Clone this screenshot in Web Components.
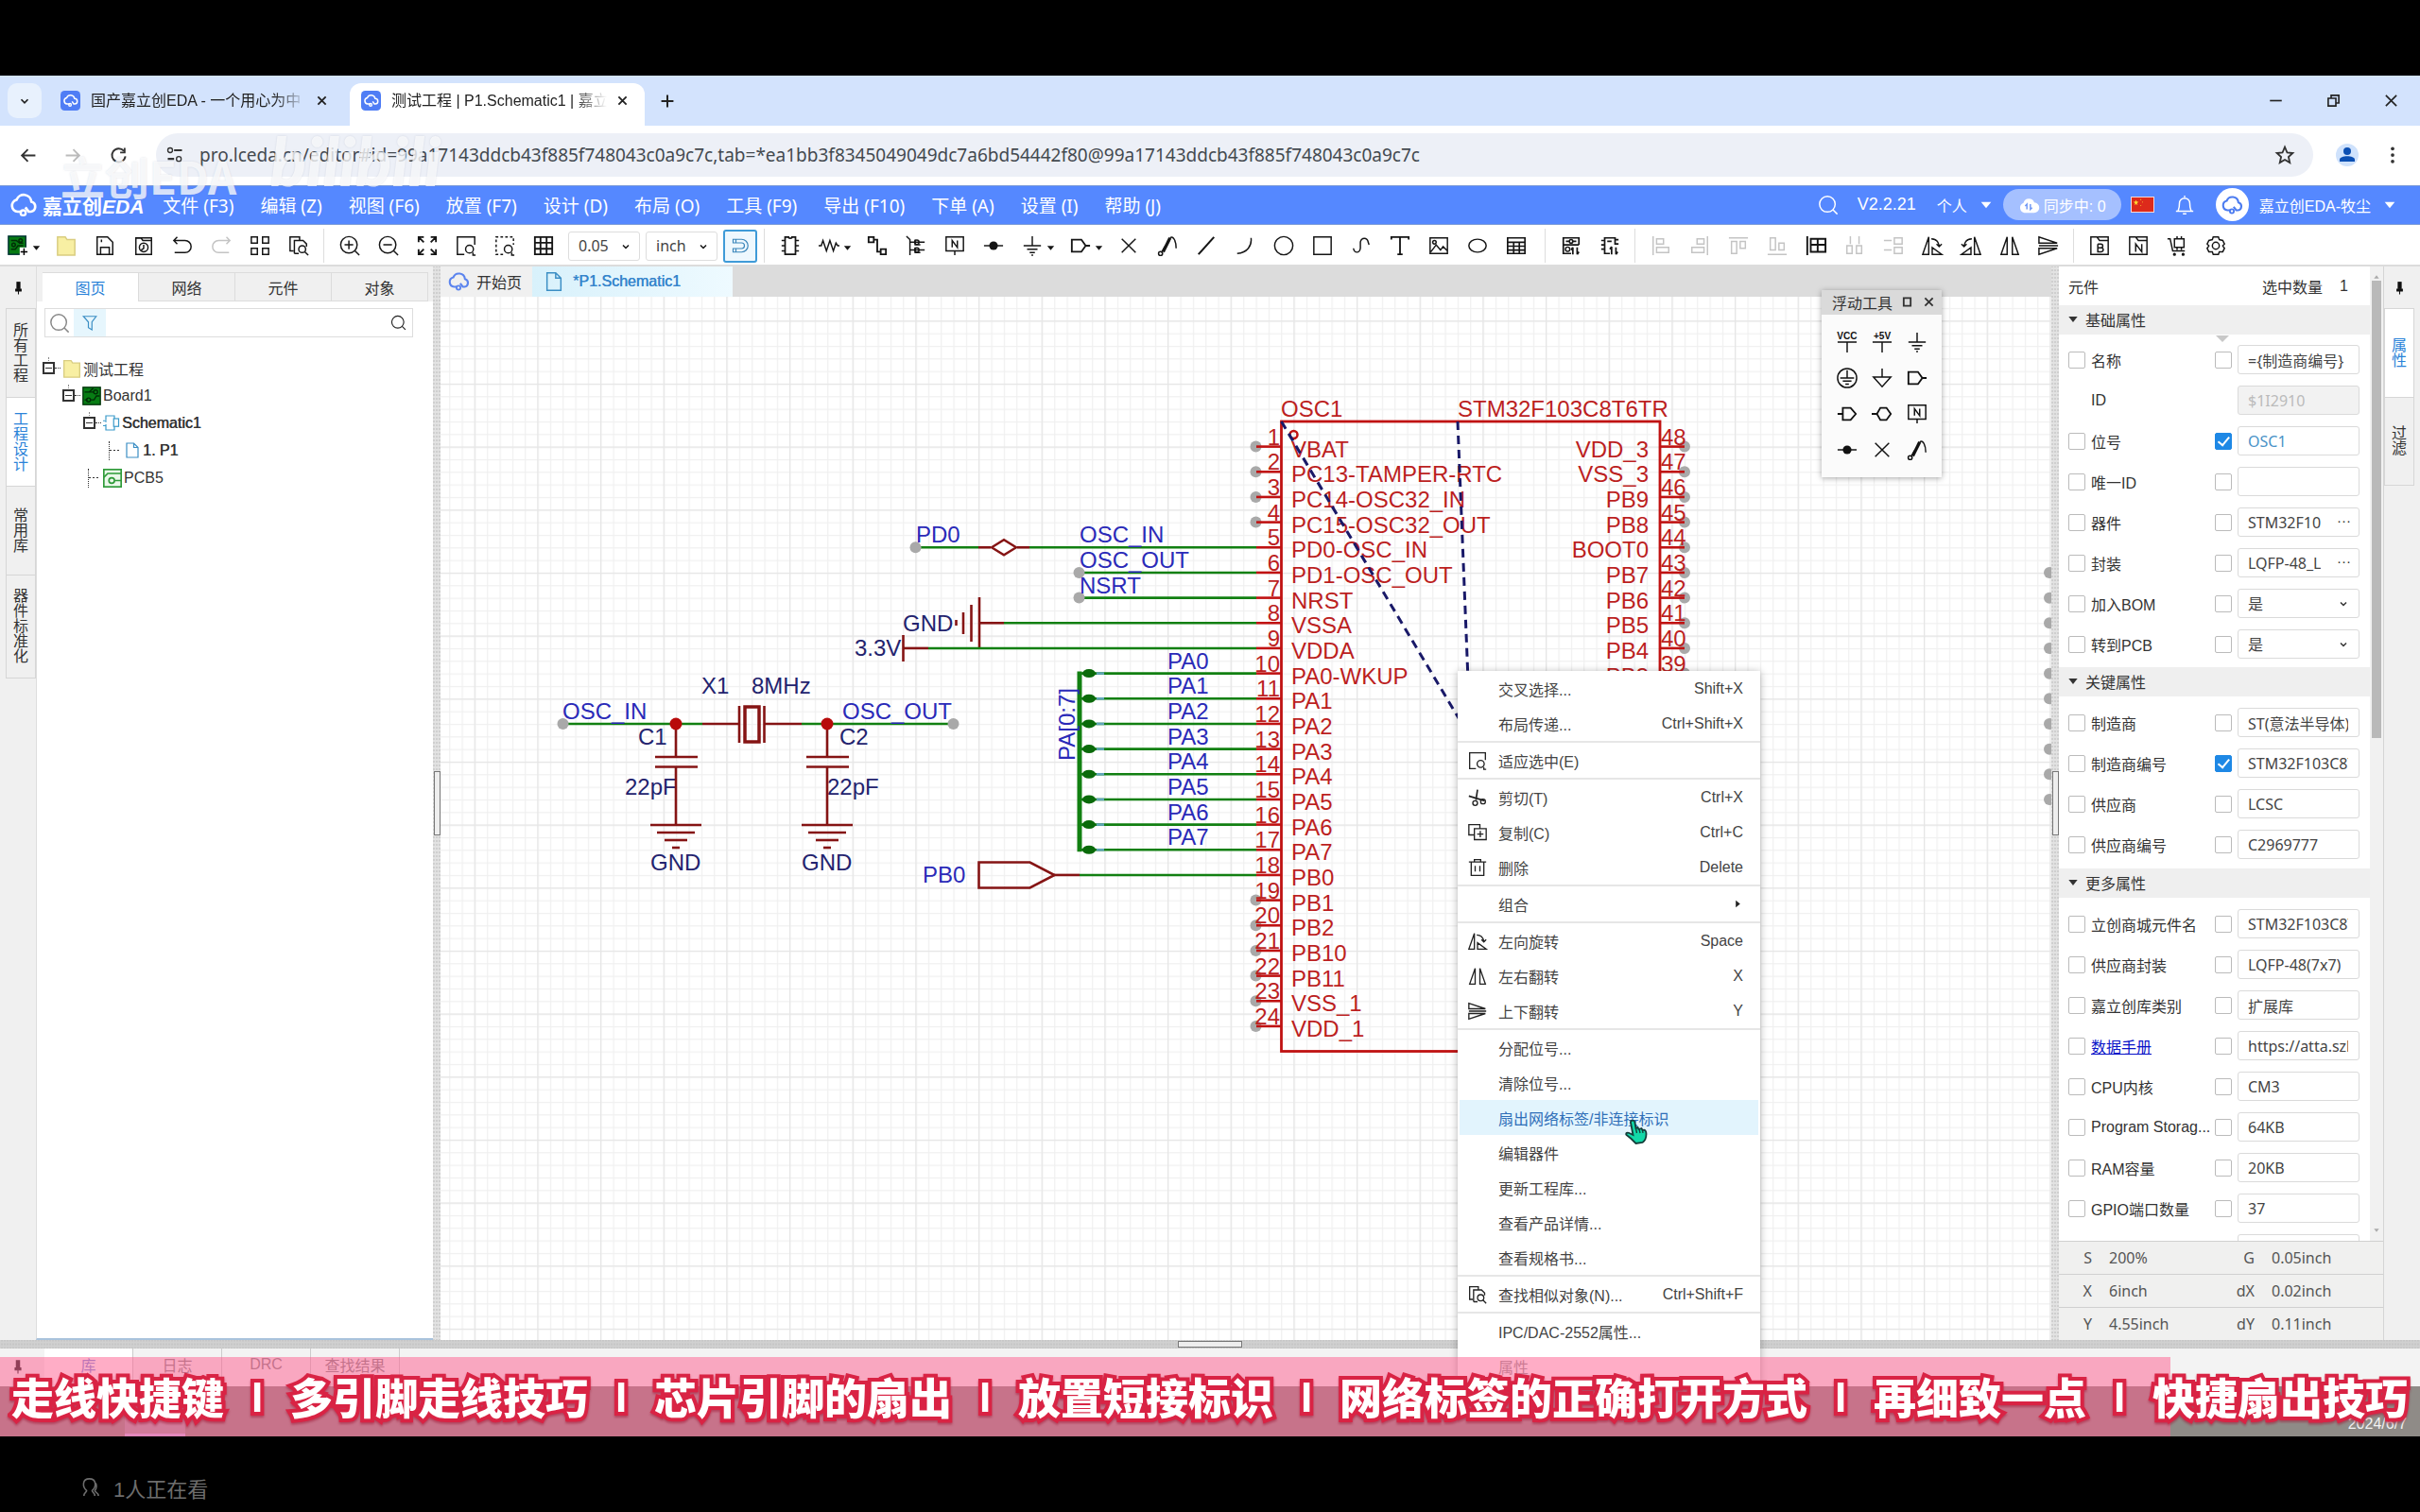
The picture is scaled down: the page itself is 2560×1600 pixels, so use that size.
<!DOCTYPE html>
<html lang="zh-CN">
<head>
<meta charset="utf-8">
<title>测试工程 | P1.Schematic1</title>
<style>
html,body{margin:0;height:100%;background:#000}
body{font:16px "Liberation Sans","Noto Sans CJK SC",sans-serif;color:#333;overflow:hidden}
</style>
</head>
<body>
<eda-app></eda-app>
<script>
const CJK = '"Noto Sans CJK SC",sans-serif';
function define(name, css, html) {
  customElements.define(name, class extends HTMLElement {
    connectedCallback() {
      if (this.shadowRoot) return;
      const root = this.attachShadow({ mode: 'open' });
      const body = typeof html === 'function' ? html(this) : html;
      root.innerHTML = `<style>:host,*{box-sizing:border-box}button,input,select{font:inherit;color:inherit;margin:0}button{border:0;background:none;padding:0;display:block}a{color:inherit}${css}</style>${body}`;
    }
  });
}

/* ---------- icons, all on a 24 unit box ---------- */
const I = {
  down: '<path d="M6 9l6 6 6-6" stroke-width="3"/>',
  caret: '<path d="M4 7h16l-8 10z" fill="currentColor" stroke="none"/>',
  right: '<path d="M7 4v16l10-8z" fill="currentColor" stroke="none"/>',
  x: '<path d="M4 4l16 16M20 4L4 20"/>',
  xw: '<path d="M3 3l18 18M21 3L3 21" stroke-width="2.6"/>',
  xb: '<path d="M3 3l18 18M21 3L3 21" stroke-width="4"/>',
  plus: '<path d="M12 1v22M1 12h22" stroke-width="3.4"/>',
  min: '<path d="M2 12h20" stroke-width="2.6"/>',
  restore: '<path d="M3 8h13v13H3zM8 8V3h13v13h-5" stroke-width="2.6"/>',
  back: '<path d="M22 12H4M12 4l-8 8 8 8" stroke-width="2.4"/>',
  fwd: '<path d="M2 12h18M12 4l8 8-8 8" stroke-width="2.4"/>',
  reload: '<path d="M19 6a9 9 0 1 0 2 7M20 2v6h-6" stroke-width="2.4"/>',
  site: '<path d="M11 6h10M3 17h8" stroke-width="2.6"/><circle cx="6" cy="6" r="3"/><circle cx="17" cy="17" r="3"/>',
  star: '<path d="M12 2l3 7 7 .6-5.300 4.800 1.600 7.300L12 18l-6.300 3.700 1.600-7.300L2 9.600 9 9z" stroke-width="2.2"/>',
  dots: '<g fill="currentColor" stroke="none"><circle cx="12" cy="3" r="2.500"/><circle cx="12" cy="12" r="2.500"/><circle cx="12" cy="21" r="2.500"/></g>',
  user: '<circle cx="12" cy="12" r="12" fill="#cfe2fc" stroke="none"/><g fill="#0b4fb3" stroke="none"><circle cx="12" cy="8" r="4"/><path d="M4 19v-2c0-5 16-5 16 0v2z"/></g>',
  cloud: '<path d="M11 18H7a5.500 5.500 0 0 1-1-10.800A7 7 0 0 1 19.500 9a4.600 4.600 0 0 1-.5 9h-2l-3-4" stroke-width="2.300"/><circle cx="12" cy="19" r="2.300" stroke-width="2"/>',
  tab: '<rect width="24" height="24" rx="5" fill="#4f7df5" stroke="none"/><path d="M11 16H8a3.800 3.800 0 0 1-.5-7.500 5 5 0 0 1 9.500 1 3.200 3.200 0 0 1 0 6.500h-1l-2-3" stroke="#fff" stroke-width="1.700"/><circle cx="11.500" cy="17" r="1.500" stroke="#fff"/>',
  search: '<circle cx="11" cy="11" r="9"/><path d="M17.500 17.500l5 5"/>',
  bell: '<path d="M2 19h20M4.500 19c0-2 1.500-2 1.500-9a6 6 0 0 1 12 0c0 7 1.500 7 1.500 9M10 22h4M12 1v2"/>',
  sync: '<path d="M7 21a6 6 0 0 1-1-11.500A6.500 6.500 0 0 1 18.500 9 6 6 0 0 1 18 21z" fill="#fff" stroke="none"/><path d="M10 17v-6l-2 2M14 11v6l2-2" stroke="#6f97f5"/>',
  board: '<rect x="1" y="1" width="20" height="21" fill="#067a12" stroke="#033"/><path d="M4 6h6l4 3h4M4 16h5l3-4h6" stroke="#012d06"/><circle cx="15" cy="6" r="2" stroke="#012d06"/><circle cx="7" cy="11" r="2" stroke="#012d06"/><path d="M14 14h10v10H14z" fill="#fff" stroke="none"/><path d="M19 15v8M15 19h8" stroke="#000"/>',
  boardt: '<rect x="1" y="1" width="22" height="22" fill="#077d14" stroke="#02330a"/><path d="M3 7h8l4 0M3 17h4M11 17h4l3-5h4M14 2l-5 5" stroke="#012d06"/><circle cx="17" cy="7" r="2.500" stroke="#012d06"/><circle cx="8" cy="17" r="2.500" stroke="#012d06"/>',
  folder: '<path d="M2 23V2h9l2 3h9v18z" fill="#f8efa3" stroke="#d9cd80"/>',
  save: '<path d="M3 2h12l6 6v14H3zM7 22v-8h10v8M8 5v3"/>',
  hist: '<path d="M3 22V3h6l2 3h10v16zM12 11v4l-3 2"/><circle cx="12" cy="14" r="5"/><path d="M3 3h18v3"/>',
  undo: '<path d="M6 2L2 6l4 4M2 6h13a7 7 0 0 1 0 14H3"/>',
  redo: '<path d="M18 2l4 4-4 4M22 6H9a7 7 0 0 0 0 14h12"/>',
  four: '<path d="M2 2h7v7H2zM15 2h7v7h-7zM2 15h7v7H2zM15 15h7v7h-7z"/>',
  find: '<path d="M6 18H2V2h11v4M7 21V6h10l4 4v3M7 21h5"/><circle cx="16" cy="16" r="4"/><path d="M19 19l4 4"/>',
  zin: '<circle cx="11" cy="11" r="9.500"/><path d="M18 18l5 5M6 11h10M11 6v10"/>',
  zout: '<circle cx="11" cy="11" r="9.500"/><path d="M18 18l5 5M6 11h10"/>',
  fit: '<path d="M2 8V2h6M2 2l6 6M22 8V2h-6M22 2l-6 6M2 16v6h6M2 22l6-6M22 16v6h-6M22 22l-6-6" stroke-width="2"/>',
  fitsel: '<path d="M10 22H2V2h20v9"/><circle cx="16" cy="16" r="4.500"/><path d="M20 20v3h3"/>',
  area: '<path d="M10 22H2V2h20v9" stroke-dasharray="3 2.500"/><circle cx="16" cy="16" r="4.500"/><path d="M20 20v3h3"/>',
  grid: '<path d="M2 2h20v20H2zM2 8.500h20M2 15.500h20M8.500 2v20M15.500 2v20" stroke-width="2"/>',
  magnet: '<path d="M2 3h12a9 9 0 0 1 0 18H2v-5h12a4 4 0 0 0 0-8H2zM6 3v5M6 16v5"/>',
  chip: '<path d="M6 2h4c0 2 4 2 4 0h4v20H6zM2 6h4M2 12h4M2 18h4M18 6h4M18 12h4M18 18h4" stroke-width="1.900"/>',
  res: '<path d="M0 12h3l2-6 4 12 4-12 4 12 3-9 2 3h2"/>',
  wire: '<path d="M2 2h6v6H2zM16 16h6v6h-6zM8 5h4v14h4" stroke-width="2"/>',
  bus: '<path d="M1 1l4 4v18M5 8h17M5 17h17M11 5v6h6M11 14v6h6"/><circle cx="13" cy="8" r="2.500"/><circle cx="13" cy="17" r="2.500"/>',
  nlab: '<path d="M2 2h20v16H2zM12 18v5M9 14V6l6 8V6"/>',
  junc: '<path d="M1 12h22"/><circle cx="12" cy="12" r="5" fill="currentColor" stroke="none"/>',
  gnd: '<path d="M12 1v11M2 12h20M6 16h12M9 20h6M11 23h2"/>',
  port: '<path d="M2 5h11l5 7-5 7H2zM18 12h5" stroke-width="2"/>',
  portl: '<path d="M7 5h9l6 7-6 7H7zM1 12h6" stroke-width="2"/>',
  porto: '<path d="M10 5h7l5 7-5 7h-7l-4-7zM0 12h6" stroke-width="2"/>',
  probe: '<path d="M7 19L15 3" stroke-width="3.600"/><path d="M15 3c4-3 7 4 7 12M5 20l4-7"/><circle cx="4" cy="21" r="2.300"/>',
  line: '<path d="M3 22L21 2" stroke-width="2.200"/>',
  arc: '<path d="M19 3c1 9-4 17-16 18"/>',
  circ: '<circle cx="12" cy="12" r="10.500"/>',
  rect: '<path d="M2 2h20v20H2z"/>',
  curve: '<path d="M3 15c1 6 7 6 8 0V8c1-6 8-6 9 0l1 3"/>',
  text: '<path d="M2 5V2h20v3M12 2v20M9 22h6" stroke-width="2"/>',
  img: '<path d="M2 3h20v18H2zM3 19l6-8 5 6 3-4 5 5"/><circle cx="7" cy="8" r="2"/>',
  ell: '<ellipse cx="12" cy="12" rx="10" ry="7.500"/>',
  table: '<path d="M2 3h20v18H2zM2 8h20M2 12.500h20M2 17h20M9 8v13M15.500 8v13" stroke-width="1.800"/>',
  swapa: '<path d="M12 21H3V3h18v8M6 7h4M13 7h5M3 11h18M14 14v8M14 14l-2 3M19 22v-8M19 22l2-3" stroke-width="1.900"/><circle cx="8" cy="16" r="2.500"/><circle cx="12" cy="7" r="2"/>',
  swapb: '<path d="M12 21H6V3h12v8M2 6h4M2 11h4M2 16h4M18 5h4M18 10h4M9 7h5M14 13v9M14 13l-2 3M19 22v-8M19 22l2-3" stroke-width="1.900"/>',
  al: '<path d="M3 1v22M7 4h8v6H7zM7 14h14v6H7z"/>',
  ar: '<path d="M21 1v22M9 4h8v6H9zM3 14h14v6H3z"/>',
  at: '<path d="M1 3h22M4 7h6v14H4zM14 7h6v8h-6z"/>',
  ab: '<path d="M1 22h22M4 3h6v14H4zM14 9h6v8h-6z"/>',
  snap: '<path d="M2 1v22M6 4h17v15H6zM6 11h17M14 4v15" stroke-width="2.100"/>',
  dh: '<path d="M7 1v9M17 1v9M3 12h6v9H3zM14 12h6v9h-6z"/>',
  dv: '<path d="M1 6h9M1 17h9M13 3h9v7h-9zM13 14h9v7h-9z"/>',
  rotl: '<path d="M8 2v20H1zM12 22h11L12 14zM11 4c5 0 8 3 9 8M17 10l3 3 3-3" />',
  rotr: '<path d="M16 2v20h7zM12 22H1l11-8zM13 4c-5 0-8 3-9 8M7 10l-3 3-3-3"/>',
  fliph: '<path d="M9 2v20H2zM15 2v20h7z"/>',
  flipv: '<path d="M1 2v7h21zM1 22v-7h21zM1 12h22"/>',
  fb: '<path d="M2 22V2h7l3 4h10v16zM10 10v9h4c3 0 3-4.500 0-4.500h-4M10 10h3.500c3 0 3 4.500 0 4.500M10 2h12v4"/>',
  fn: '<path d="M2 22V2h7l3 4h10v16zM9 19v-9l7 9v-9M10 2h12v4"/>',
  cart: '<path d="M1 4h3l3 14h14M9 4h11v10H9zM12 1v3M17 1v3M12 14v3M17 14v3"/><circle cx="9" cy="22" r="1"/><circle cx="19" cy="22" r="1"/>',
  gear: '<path d="M9 2h6l1 3 4 1 2 4-2 2 2 3-2 4-4 0-1 3H9l-1-3-4 0-2-4 2-3-2-2 2-4 4-1z"/><circle cx="12" cy="12" r="4"/>',
  pin: '<path d="M9 3h6v11H9z" fill="currentColor" stroke="none"/><path d="M8 14h8v3H8zM12 17v5" fill="currentColor" stroke-width="1.500"/>',
  filter: '<path d="M3 3h18l-6 8v11l-5-3v-8z"/>',
  file: '<path d="M4 2h10l6 6v14H4zM14 2v6h6" stroke="#3b8ec4"/>',
  sch: '<path d="M4 8V2h12v4M4 16v6h12v-5M0 9h4v2M0 16h4v-2" stroke="#3b9ac9"/><rect x="15" y="6" width="7" height="11" stroke="#3b9ac9"/>',
  pcb: '<rect x="1" y="1" width="22" height="22" fill="#eaf8ea" stroke="#2e9a38" stroke-width="2"/><path d="M1 11l5-5h17M15 15h8" stroke="#2e9a38" stroke-width="2"/><circle cx="11" cy="15" r="3.500" stroke="#2e9a38" stroke-width="2"/>',
  vcc: '<path d="M1 12h22M12 12v12"/><text x="12" y="9" font-size="11" text-anchor="middle" fill="currentColor" stroke="none" font-weight="bold">VCC</text>',
  v5: '<path d="M1 12h22M12 12v12"/><text x="12" y="9" font-size="11" text-anchor="middle" fill="currentColor" stroke="none" font-weight="bold">+5V</text>',
  pgnd: '<circle cx="12" cy="12" r="11"/><path d="M12 3v9M4 12h16M7 15.500h10M10 19h4"/>',
  agnd: '<path d="M12 1v10M2 11h20l-10 11z"/>',
  sq: '<path d="M4 3h16v18H4z" stroke-width="4"/>',
  cut: '<path d="M1 10l20 6M12 2l-2 13" stroke-width="2"/><circle cx="9" cy="19" r="3"/><circle cx="19" cy="17" r="3"/>',
  copy: '<path d="M8 15H1V2h14v5M8 7h15v14H8zM15.500 10v8M11.500 14h8"/>',
  del: '<path d="M1 5h22M8 5V2h8v3M4 5v17h16V5M9 10v7M15 10v7"/>',
  people: '<path d="M5 22c0-4 3-4 3-6-5-4-5-13 3-13s8 9 3 13c0 2 3 2 3 6M17 7c3 2 2 7 0 9 0 2 4 2 4 6"/>'
};
define('eda-icon', `:host{display:block;width:22px;height:22px;flex:none}svg{display:block;width:100%;height:100%;overflow:visible;font-family:"Liberation Sans"}`,
  el => `<svg viewBox="0 0 24 24" fill="none" stroke="currentColor" stroke-width="1.6" aria-hidden="true">${I[el.getAttribute('name')]}</svg>`);
const ic = (n, c = '') => `<eda-icon name="${n}" class="${c}"></eda-icon>`;

/* ---------- browser chrome ---------- */
define('browser-tabs', `
:host{display:flex;align-items:center;height:53px;background:#d3e3fd;padding:0 23px 0 8px;color:#222}
.menu{width:36px;height:37px;border-radius:10px;background:#e8f1fd;display:grid;place-items:center;margin-right:8px}
.menu eda-icon{width:14px;height:14px}
.tab{display:flex;align-items:center;gap:11px;width:318px;height:45px;align-self:flex-end;padding:0 24px 8px 12px}
.tab eda-icon{width:21px;height:21px}
.tab span{flex:1;white-space:nowrap;overflow:hidden;height:24px;line-height:24px;-webkit-mask-image:linear-gradient(90deg,#000 85%,transparent)}
.on{background:#fff;border-radius:12px 12px 0 0;width:312px;padding-right:18px}
.tab eda-icon.c{width:11px;height:11px}
.add{margin-left:17px}.add eda-icon{width:14px;height:14px}
.win{margin-left:auto;display:flex;gap:46px}.win eda-icon{width:15px;height:15px}`,
`<button class="menu" aria-label="搜索标签页">${ic('down')}</button>
<div class="tab">${ic('tab')}<span>国产嘉立创EDA - 一个用心为中</span><button aria-label="关闭">${ic('xb','c')}</button></div>
<div class="tab on">${ic('tab')}<span>测试工程 | P1.Schematic1 | 嘉立</span><button aria-label="关闭">${ic('xb','c')}</button></div>
<button class="add" aria-label="新标签页">${ic('plus')}</button>
<div class="win"><button aria-label="最小化">${ic('min')}</button><button aria-label="还原">${ic('restore')}</button><button aria-label="关闭窗口">${ic('xw')}</button></div>`);

define('address-bar', `
:host{display:flex;align-items:center;height:63px;background:#fff;padding:0 20px 1px;color:#333}
.nav{display:flex;gap:29px;margin-right:30px}.nav eda-icon{width:19px;height:19px}.off{color:#bbb}
.box{flex:1;height:46px;border-radius:23px;background:#edf0f7;display:flex;align-items:center;gap:16px;padding:0 20px 0 10px}
.box eda-icon{width:20px;height:20px}
input{flex:1;border:0;background:none;padding:0;font:19px "Noto Sans",${CJK};color:#444a50;min-width:0}
.u{width:24px;height:24px;margin:0 27px 0 24px}.d{width:18px;height:18px}`,
`<div class="nav"><button aria-label="后退">${ic('back')}</button><button class="off" aria-label="前进">${ic('fwd')}</button><button aria-label="重新加载">${ic('reload')}</button></div>
<div class="box">${ic('site')}<input aria-label="地址" value="pro.lceda.cn/editor#id=99a17143ddcb43f885f748043c0a9c7c,tab=*ea1bb3f8345049049dc7a6bd54442f80@99a17143ddcb43f885f748043c0a9c7c">${ic('star')}</div>
${ic('user','u')}<button aria-label="更多">${ic('dots','d')}</button>`);

/* ---------- application menu ---------- */
define('menu-bar', `
:host{display:flex;align-items:center;height:42px;background:#5588ff;border-top:1px solid #7b9bd8;border-bottom:1px solid #7b9bd8;color:#fff;padding:0 24px 1px 9px}
.logo{display:flex;align-items:center;gap:5px;font-size:21px;font-weight:bold;margin-right:20px;white-space:nowrap}
.logo eda-icon{width:31px;height:28px}.logo i{font-style:italic}
nav{display:flex;gap:28px}nav button{font:19px "Noto Sans",${CJK};white-space:nowrap}
.r{margin-left:auto;display:flex;align-items:center;white-space:nowrap}
.ver{font-size:18px;margin:0 22px 0 20px}
.t{width:16px;height:16px;margin-left:12px}
.pill{background:#a5c0ff;border-radius:17px;height:33px;width:125px;display:flex;align-items:center;justify-content:center;gap:5px;font-size:16px;margin:0 10px 0 10px}
.flag{width:25px;height:17px;border:1px solid #f3d8d8;margin-right:21px}.flag svg{display:block;width:100%;height:100%}
.av{width:35px;height:35px;border-radius:50%;background:#fff;color:#4c7cf0;display:grid;place-items:center;margin:0 11px 0 22px}
.av eda-icon{width:24px}`,
`<div class="logo">${ic('cloud')}<span>嘉立创<i>EDA</i></span></div>
<nav>${['文件 (F3)','编辑 (Z)','视图 (F6)','放置 (F7)','设计 (D)','布局 (O)','工具 (F9)','导出 (F10)','下单 (A)','设置 (I)','帮助 (J)'].map(t=>`<button>${t}</button>`).join('')}</nav>
<div class="r">${ic('search')}<span class="ver">V2.2.21</span><span>个人</span>${ic('caret','t')}
<button class="pill">${ic('sync')}<span>同步中: 0</span></button>
<span class="flag"><svg viewBox="0 0 25 17" preserveAspectRatio="none"><path fill="#dd2a1b" d="M0 0h25v17H0z"/><path fill="#fd3" d="M5 3l1 2h2L6 7l1 2-2-1-2 1 1-2-2-2h2zM10 2h1v1h-1zM12 5h1v1h-1zM10 9h1v1h-1z"/></svg></span>
${ic('bell')}<span class="av">${ic('cloud')}</span><span>嘉立创EDA-牧尘</span>${ic('caret','t')}</div>`);

/* ---------- icon toolbar ---------- */
const tb = list => list.split(' ').map(n => {
  const drop = n.endsWith('+'), off = n.endsWith('-'), k = n.replace(/[+-]$/, '');
  return `<button class="${drop ? 'drop' : ''}${off ? 'off' : ''}" aria-label="${k}">${ic(k)}${drop ? ic('caret','s') : ''}</button>`;
}).join('');
define('tool-bar', `
:host{display:flex;align-items:center;height:44px;background:#fff;border-bottom:2px solid #dcdcdc;color:#151515;padding:2px 0 0 8px}
.g{display:flex;align-items:center;gap:19px}
.drop{display:flex;width:32px;align-items:center}.s{width:11px;height:11px;margin:4px 0 0 3px}
.w{margin-right:4px}
.off{color:#c4c4c4}
hr{border:0;width:1px;height:36px;background:#ddd;margin:0 16px 0 15px;flex:none}
.f{display:flex;gap:6px;margin-left:15px}
.sel{position:relative;width:76px}
select{appearance:none;width:100%;height:31px;border:1px solid #ddd;border-radius:3px;background:#fff;padding:0 6px 0 10px;color:#444;font:16px "Noto Sans"}
.sel eda-icon{position:absolute;right:9px;top:10px;width:12px;height:12px;pointer-events:none}
.mag{width:36px;height:35px;margin:-2px 0;border:2px solid #3f9bd8;border-radius:3px;background:#eef8fe;color:#3b86ba;display:grid;place-items:center}
.mag eda-icon{width:20px;height:18px}
hr.n{margin-left:7px}`,
`<div class="g">${tb('board+ folder save hist undo redo- four find')}</div><hr>
<div class="g">${tb('zin zout fit fitsel area grid')}</div>
<div class="f"><span class="sel"><select aria-label="栅格尺寸"><option>0.05</option></select>${ic('down')}</span><span class="sel"><select aria-label="单位"><option>inch</option></select>${ic('down')}</span><button class="mag" aria-label="吸附">${ic('magnet')}</button></div><hr class="n">
<div class="g w">${tb('chip res+ wire bus nlab junc gnd+ port+ x probe line arc circ rect curve text img ell table')}</div><hr>
<div class="g">${tb('swapa swapb')}</div><hr>
<div class="g">${tb('al- ar- at- ab- snap dh- dv- rotl rotr fliph flipv')}</div><hr>
<div class="g">${tb('fb fn cart gear')}</div>`);

/* ---------- vertical side tabs ---------- */
define('side-tabs', `
:host{display:flex;flex-direction:column;flex:none;background:#f0f0f0;color:#333;width:38px}
:host([side=left]){padding-left:6px}:host([side=right]){padding-right:6px}
.p{height:44px;display:grid;place-items:center;color:#111;margin:0 4px 0 -2px}.p eda-icon{width:17px;height:17px}
:host([side=right]) .p{margin:0}
button{border:1px solid #d6d6d6;border-bottom:0;min-height:94px;padding:14px 7px;line-height:16px;width:32px;white-space:normal;text-align:center}
button:last-of-type{border-bottom:1px solid #d6d6d6}
.on{background:#fff;color:#2b83d8}`,
el => `<div class="p">${ic('pin')}</div>` + el.getAttribute('tabs').split(',').map(t => `<button class="${t[0]==='*'?'on':''}">${[...t.replace('*','')].join('<br>')}</button>`).join(''));

/* ---------- project tree ---------- */
const node = (pad, icon, text, open, cls='') => `<li style="padding-left:${pad}px" class="${cls}">${open ? '<i class="box"></i>' : '<i class="leaf"></i>'}${ic(icon)}<span>${text}</span></li>`;
define('project-panel', `
:host{display:block;width:420px;flex:none;background:#fff;border-left:1px solid #ddd;border-bottom:2px solid #a9c3dc}
.tabs{display:grid;grid-template-columns:repeat(4,1fr);background:#f0f0f0;padding:6px 5px 0 6px;height:37px}
.tabs button{border:1px solid #dcdcdc;border-left:0;height:31px}
.tabs .on{background:#fff;border-bottom:0;color:#2b83d8}
.find{display:flex;align-items:center;margin:7px 0 0 8px;height:31px;border:1px solid #ddd;width:390px}
.find .a{width:30px;display:grid;place-items:center;color:#888}
.find .b{width:34px;height:29px;background:#e6f6fd;display:grid;place-items:center;color:#3b8ec4}
.b eda-icon{width:18px;height:19px}.find input{flex:1;border:0;min-width:0}.z{width:17px;height:17px;margin-right:6px;color:#222}
ul{list-style:none;margin:18px 0 0;padding:0}
li{display:flex;align-items:center;height:29px;white-space:nowrap}
li eda-icon{width:20px;height:20px;margin-right:2px}
li.b{text-shadow:.5px 0 currentColor}
.box{width:13px;height:13px;border:2px solid #333;display:block;margin-right:8px;background:linear-gradient(#333,#333) center/7px 1px no-repeat;position:relative}
.box:after{content:"";position:absolute;left:11px;top:4px;width:6px;border-top:1px dotted #333}
.box:before{content:"";position:absolute;left:4px;top:-7px;height:22px;border-left:1px dotted #888;clip-path:polygon(0 0,100% 0,100% 5px,0 5px)}
.leaf{width:12px;height:20px;border-left:1px dotted #333;margin-right:4px;background:linear-gradient(90deg,#333 50%,transparent 0) left center/4px 1px repeat-x}`,
`<div class="tabs"><button class="on">图页</button><button>网络</button><button>元件</button><button>对象</button></div>
<div class="find"><span class="a">${ic('search')}</span><button class="b" aria-label="过滤">${ic('filter')}</button><input aria-label="搜索">${ic('search','z')}</div>
<ul>${node(6,'folder','测试工程',1)}${node(27,'boardt','Board1',1)}${node(49,'sch','Schematic1',1,'b')}${node(76,'file','1. P1',0,'b')}${node(54,'pcb','PCB5',0)}</ul>`);

define('split-bar', `
:host{display:grid;place-items:center;flex:none;background:#e2e2e2 radial-gradient(#bbb 1px,transparent 1px) center/3px 4px}
:host([dir=v]){width:8px}:host([dir=h]){height:9px;background-color:#d0d0d0}
i{display:block;border:1px solid #777;background:#eee}
:host([dir=v]) i{width:7px;height:68px}:host([dir=h]) i{width:68px;height:7px}`, `<i></i>`);

/* ---------- schematic sheet ---------- */
function sheet() {
  const P = 80 / 3, y = n => 472.6 + P * (n - 1), out = [];
  const T = (x, b, s, c, a='start') => `<text x="${x}" y="${b}" fill="${c}" text-anchor="${a}">${s}</text>`;
  const L = (x1, y1, x2, y2, c, w=2.6) => `<path d="M${x1} ${y1}L${x2} ${y2}" stroke="${c}" stroke-width="${w}"/>`;
  const D = (x, yy, r=6) => `<circle cx="${x}" cy="${yy}" r="${r}" fill="#a9a9a9"/>`;
  const R='#bc1f1f', RL='#c01212', M='#851414', G='#128012', B='#2a2ab8', N='#23236e';
  const left = 'VBAT,PC13-TAMPER-RTC,PC14-OSC32_IN,PC15-OSC32_OUT,PD0-OSC_IN,PD1-OSC_OUT,NRST,VSSA,VDDA,PA0-WKUP,PA1,PA2,PA3,PA4,PA5,PA6,PA7,PB0,PB1,PB2,PB10,PB11,VSS_1,VDD_1'.split(',');
  const right = 'VDD_3,VSS_3,PB9,PB8,BOOT0,PB7,PB6,PB5,PB4,PB3'.split(',');
  left.forEach((s,i) => { const n=i+1;
    if (n<5||n>18) out.push(D(1328.500,y(n)));
    out.push(L(1329,y(n),1355,y(n),RL), T(1366,y(n)+11,s,R), T(1354,y(n)-2,n,R,'end')); });
  right.forEach((s,i) => { const n=i+1;
    out.push(D(1782,y(n)), L(1756,y(n),1782,y(n),RL), T(1744,y(n)+11,s,R,'end'), T(1757,y(n)-2,49-n,R)); });
  out.push(`<rect x="1355.500" y="446" width="400.500" height="666.500" fill="none" stroke="${RL}" stroke-width="2.8"/>`,
    `<circle cx="1368.500" cy="460" r="4" fill="none" stroke="${RL}" stroke-width="2.5"/>`,
    T(1355,441,'OSC1',R), T(1542,441,'STM32F103C8T6TR',R),
    `<path d="M1355.500 446L1555 780M1542 446L1553 720" stroke="#191968" stroke-width="3" stroke-dasharray="9 6"/>`);
  /* nets into the left side */
  out.push(L(969,y(5),1035,y(5),G), L(1035,y(5),1048,y(5),M), L(1076,y(5),1089,y(5),M), L(1089,y(5),1329,y(5),G),
    `<path d="M1049 ${y(5)}l13-8 13 8-13 8z" fill="#fff" stroke="${M}" stroke-width="2.4"/>`, D(968.5,y(5)), T(969,574,'PD0',B), T(1142,574,'OSC_IN',B),
    L(1142,y(6),1329,y(6),G), D(1141.5,y(6)), T(1142,601,'OSC_OUT',B), L(1142,y(7),1329,y(7),G), D(1141.5,y(7)), T(1142,627.5,'NSRT',B),
    T(955,668,'GND',N), L(1036,632,1036,687,M), L(1027.5,640,1027.5,679,M), L(1019,648,1019,671,M), L(1011.5,656,1011.5,662,M), L(1036,y(8),1062,y(8),M), L(1062,y(8),1329,y(8),G),
    T(904,694,'3.3V',N), L(955.5,672,955.5,700,M), L(955,y(9),982,y(9),M), L(982,y(9),1329,y(9),G));
  for (let i=0;i<8;i++) { const v=y(10+i);
    out.push(L(1142,v,1329,v,G), L(1160,v,1168,v,'#5fa6b8'), `<ellipse cx="1152" cy="${v}" rx="7" ry="4.5" fill="#0a6a0a"/>`, T(1235,v-5,'PA'+i,B)); }
  out.push(L(1142,y(10)-2,1142,y(17)+2,G,5), `<text transform="translate(1137 805) rotate(-90)" fill="${B}">PA[0:7]</text>`,
    T(976,934,'PB0',B), `<path d="M1035.500 912.500h54l26 13.500-26 13.500h-54z" fill="none" stroke="${M}" stroke-width="2.6"/>`, L(1115,y(18),1142,y(18),M), L(1142,y(18),1329,y(18),G));
  /* crystal and load capacitors */
  out.push(L(596,766,743,766,G), L(743,766,781,766,M), L(808,766,848,766,M), L(848,766,1008,766,G), L(782,747,782,786,M), L(808.5,747,808.5,786,M),
    `<rect x="788" y="748" width="15" height="37" fill="none" stroke="${M}" stroke-width="3.5"/>`, D(595.5,766), D(1008.5,766),
    T(742,734,'X1',N), T(795,734,'8MHz',N), T(595,761,'OSC_IN',B), T(891,761,'OSC_OUT',B), T(675,788,'C1',N), T(888,788,'C2',N), T(661,841,'22pF',N), T(875,841,'22pF',N), T(688,921,'GND',N), T(848,921,'GND',N));
  for (const x of [715,875]) out.push(L(x,766,x,800,M), L(x,811,x,873,M), L(x-22,801,x+23,801,M), L(x-22,811.5,x+23,811.5,M), L(x-27,873,x+27,873,M), L(x-20,881,x+20,881,M), L(x-12,889,x+12,889,M), L(x-4,897,x+4,897,M), `<circle cx="${x}" cy="766" r="6.500" fill="#b80b0b"/>`);
  for (let k=0;k<10;k++) out.push(D(2168,606+P*k));
  return out.join('');
}
define('schematic-sheet', `:host{display:block;flex:1;min-height:0;overflow:hidden;background:#fff}svg{display:block;width:100%;height:100%;font:24px "Liberation Sans",sans-serif}`,
() => `<svg viewBox="466 314 1704 1104" preserveAspectRatio="xMinYMin slice"><defs>
<pattern id="a" x="8.500" y="5.900" width="13.3333" height="13.3333" patternUnits="userSpaceOnUse"><path d="M0 .5H14M.5 0V14" stroke="#f0f0f0" stroke-width="1.4"/></pattern>
<pattern id="b" x="35" y="5.900" width="66.6667" height="66.6667" patternUnits="userSpaceOnUse"><path d="M0 .5H67M.5 0V67" stroke="#e6e6e6" stroke-width="1.4"/></pattern></defs>
<path d="M464 314h1706v1104H464z" fill="url(#a)"/><path d="M464 314h1706v1104H464z" fill="url(#b)"/>${sheet()}</svg>`);

define('doc-tabs', `
:host{display:flex;height:32px;background:#dcdcdc;flex:none}
button{display:flex;align-items:center;gap:8px;padding:0 11px 0 8px;background:#f0f0f0}
.on{width:212px;padding-left:12px;gap:9px;background:linear-gradient(90deg,#d8f1fb,#eefaff);color:#3585cc}
.on span{text-shadow:.5px 0 currentColor}
.h{color:#5b84ee}`,
`<button><eda-icon name="cloud" class="h"></eda-icon><span>开始页</span></button><button class="on">${ic('file')}<span>*P1.Schematic1</span></button>`);

define('float-tools', `
:host{position:absolute;left:1461px;top:25px;width:127px;height:198px;background:#fbfbfb;box-shadow:0 1px 6px rgba(0,0,0,.35)}
header{height:26px;background:#dadada;display:flex;align-items:center;padding:0 7px 1px 11px;gap:12px;white-space:nowrap}
header span{flex:none}header eda-icon{width:11px;height:11px}header button:first-of-type{margin-left:-2px}
.g{display:grid;grid-template-columns:repeat(3,22px);gap:16px 15px;padding:18px 16px;color:#111}`,
`<header><span>浮动工具</span><button aria-label="最大化">${ic('sq')}</button><button aria-label="关闭">${ic('xb')}</button></header>
<div class="g">${'vcc v5 gnd pgnd agnd port portl porto nlab junc x probe'.split(' ').map(n=>`<button aria-label="${n}">${ic(n)}</button>`).join('')}</div>`);

/* ---------- context menu ---------- */
const MENU = [['','交叉选择...','Shift+X'],['','布局传递...','Ctrl+Shift+X'],0,['fitsel','适应选中(E)',''],0,['cut','剪切(T)','Ctrl+X'],['copy','复制(C)','Ctrl+C'],['del','删除','Delete'],0,['','组合','>'],0,['rotl','左向旋转','Space'],['fliph','左右翻转','X'],['flipv','上下翻转','Y'],0,['','分配位号...',''],['','清除位号...',''],['','扇出网络标签/非连接标识','','on'],['','编辑器件',''],['','更新工程库...',''],['','查看产品详情...',''],['','查看规格书...',''],0,['find','查找相似对象(N)...','Ctrl+Shift+F'],0,['','IPC/DAC-2552属性...',''],['','属性','','under']];
define('context-menu', `
:host{position:absolute;left:1076px;top:428px;width:320px;background:#fff;box-shadow:0 1px 8px rgba(0,0,0,.3);color:#444;z-index:2}
button{display:flex;align-items:center;width:316px;margin:0 2px;height:37px;padding:0 16px 0 8px;text-align:left;white-space:nowrap}
.i{width:22px;margin-right:11px}.k{margin-left:auto}.k eda-icon{width:11px;height:11px}
eda-icon{height:20px;color:#222}hr{border:0;height:2px;margin:0;background:#e6e6e6}
.on{background:#e2f4fd;color:#2f6fb8}.under{color:#999}
.cur{position:absolute;left:177px;top:474px;width:24px;height:27px}`,
() => MENU.map(m => m ? `<button class="${m[3]||''}"><span class="i">${m[0]?ic(m[0]):''}</span><span>${m[1]}</span><span class="k">${m[2]==='>'?ic('right'):m[2]}</span></button>` : '<hr>').join('') +
`<svg class="cur" viewBox="0 0 24 27"><path d="M7 2c2-1 3 0 3.500 2l1 6 2-1 1 2 3-1 1 2c3-1 4 1 4 4s-1 7-4 9l-7 1-5-5-5-4c-1-2 1-3 3-2l4 2L6 4c0-1 0-2 1-2z" fill="#12d8a8" stroke="#143d3a" stroke-width="1.8"/><path d="M11.500 10l1 5M15 11l1 4M18.500 12l.5 3" stroke="#143d3a" stroke-width="1.3"/></svg>`);

define('work-area', `:host{flex:1;min-width:0;display:flex;flex-direction:column;position:relative}`,
`<doc-tabs></doc-tabs><schematic-sheet></schematic-sheet><float-tools></float-tools><context-menu></context-menu>`);

/* ---------- properties ---------- */
define('prop-row', `
:host{display:grid;grid-template-columns:18px 125px 18px 129px;column-gap:6px;align-items:center;height:43px;padding-left:10px}
input[type=checkbox]{appearance:none;width:18px;height:18px;border:1px solid #bbb;border-radius:2px;background:#fff;display:grid;place-items:center}
input[type=checkbox]:checked{background:#1e88e5;border-color:#1e88e5}
input[type=checkbox]:checked:after{content:"";width:5px;height:10px;border:solid #fff;border-width:0 2px 2px 0;transform:rotate(40deg) translate(-1px,-1px)}
label,a{white-space:nowrap;grid-column:2}a{color:#0a14c8}
.v{position:relative;grid-column:4}.c2{grid-column:3}
.v input,select{appearance:none;width:100%;height:31px;border:1px solid #dadada;border-radius:3px;background:#fff;padding:0 11px 0 10px;font:16px "Noto Sans",${CJK};color:#444;display:block}
.v.dots input{padding-right:40px}.v input:disabled{background:#f2f2f2;color:#bbb}.v.blue input{color:#4a93c8}
.e{position:absolute;right:9px;top:5px;font-size:15px;color:#333}
.v eda-icon{position:absolute;right:11px;top:10px;width:12px;height:12px;pointer-events:none}`,
el => {
  const [lab, val, f=''] = el.getAttribute('data').split('|');
  const off = f.includes('d');
  return `${off?'<span></span>':`<input type="checkbox" aria-label="${lab} 显示名">`}${f.includes('l')?`<a href="#">${lab}</a>`:`<label for="v">${lab}</label>`}${off?'':`<input class="c2" type="checkbox" aria-label="${lab} 显示值" ${f.includes('c')?'checked':''}>`}
<span class="v ${f.includes('m')?'dots':''} ${f.includes('b')?'blue':''}">${f.includes('s')?`<select id="v" aria-label="${lab}"><option>${val}</option></select>${ic('down')}`:`<input id="v" aria-label="${lab}" value="${val}" ${off?'disabled':''}>`}${f.includes('m')?'<span class="e">···</span>':''}</span>`;
});
const rows = a => a.map(d => `<prop-row data="${d}"></prop-row>`).join('');
define('prop-group', `
:host{display:block}h3{margin:0;height:31px;background:#efefef;font:16px "Liberation Sans",${CJK};display:flex;align-items:center;gap:6px;padding:0 0 1px 8px}
h3 eda-icon{width:14px;height:14px}.b{padding:6px 0 4px;position:relative}
:host([mark]) .b{padding:5px 0 3px}
:host([mark]) .b:before{content:"";position:absolute;left:166px;top:1px;border:7px solid transparent;border-top-color:#c8c8c8;border-bottom:0}`,
el => `<h3>${ic('caret')}<span>${el.getAttribute('heading')}</span></h3><div class="b"><slot></slot></div>`);
define('property-panel', `
:host{display:flex;flex-direction:column;width:344px;flex:none;background:#fff}
.m{flex:1;min-height:0;display:flex}
.l{flex:1;overflow:hidden}
.hd{height:41px;display:flex;align-items:center;padding:0 38px 0 10px;width:344px}.hd span:nth-child(2){margin:0 18px 0 auto}
.sb{width:15px;background:#f1f1f1;display:flex;flex-direction:column;align-items:center;padding:7px 0;color:#aaa;border-right:1px solid #d5d5d5}
.sb eda-icon{width:8px;height:8px}.sb .up{rotate:180deg}.sb i{width:10px;height:484px;background:#b9b9b9}.sb .dn{margin-top:auto}
dl{margin:0;background:#f0f0ef;font-family:"Noto Sans",${CJK};color:#555;border-right:1px solid #d5d5d5}
dl div{display:grid;grid-template-columns:35px 136px 36px 1fr;height:35px;align-items:center;border-top:1px solid #d0d0d0}
dt,dd{margin:0}dt{text-align:right}dd{padding-left:18px}`,
`<div class="m"><div class="l"><div class="hd"><span>元件</span><span>选中数量</span><span>1</span></div>
<prop-group heading="基础属性" mark>${rows(['名称|={制造商编号}','ID|$1I2910|d','位号|OSC1|cb','唯一ID|','器件|STM32F103|m','封装|LQFP-48_L7.0|m','加入BOM|是|s','转到PCB|是|s'])}</prop-group>
<prop-group heading="关键属性">${rows(['制造商|ST(意法半导体)','制造商编号|STM32F103C8T6TR|c','供应商|LCSC','供应商编号|C2969777'])}</prop-group>
<prop-group heading="更多属性">${rows(['立创商城元件名|STM32F103C8T6TR','供应商封装|LQFP-48(7x7)','嘉立创库类别|扩展库','数据手册|https://atta.szlcsc.com|l','CPU内核|CM3','Program Storag...|64KB','RAM容量|20KB','GPIO端口数量|37','|'])}</prop-group></div>
<div class="sb">${ic('caret','up')}<i></i>${ic('caret','dn')}</div></div>
<dl><div><dt>S</dt><dd>200%</dd><dt>G</dt><dd>0.05inch</dd></div><div><dt>X</dt><dd>6inch</dd><dt>dX</dt><dd>0.02inch</dd></div><div><dt>Y</dt><dd>4.55inch</dd><dt>dY</dt><dd>0.11inch</dd></div></dl>`);

/* ---------- lower dock, task bar and caption strip ---------- */
define('bottom-dock', `
:host{display:block;position:relative;flex:none;height:93px;background:#f3f3f3;color:#888}
.tabs{display:flex;height:40px;padding-left:10px;align-items:stretch}
.tabs eda-icon{width:18px;height:18px;margin:10px 19px 0 0;color:#222}
.tabs button{width:94px;border-right:1px solid #ccc;padding-bottom:7px}.tabs .on{background:#fff;color:#7a8ede}
.bar{height:53px;background:#8f8b87;position:relative;display:flex;justify-content:flex-end;align-items:flex-end;padding:0 14px 4px 0;color:#f2f2f2}
.bar i{position:absolute;left:132px;bottom:0;width:64px;height:53px;background:#a49aa6;border-bottom:3px solid #c9b4ea}
.cap{position:absolute;inset:9px 0 0 0;z-index:5;display:flex;align-items:center;padding-left:12px;white-space:nowrap;color:#fff;font:900 45px "Noto Sans CJK SC",sans-serif;-webkit-text-stroke:8px #d92344;paint-order:stroke fill;line-height:84px;overflow:hidden;filter:drop-shadow(0 2px 1px rgba(160,20,50,.5))}
.cap b{width:70px;text-align:center;font:900 42px Lato,sans-serif;line-height:84px}
.tint{position:absolute;left:0;top:9px;bottom:0;width:89.7%;background:rgba(255,92,142,.5);z-index:4}`,
`<div class="tabs">${ic('pin')}<button class="on">库</button><button>日志</button><button>DRC</button><button>查找结果</button></div>
<div class="bar"><i></i><span>2024/6/7</span></div><div class="tint"></div>
<div class="cap">${['走线快捷键','多引脚走线技巧','芯片引脚的扇出','放置短接标识','网络标签的正确打开方式','再细致一点','快捷扇出技巧'].map(t=>`<span>${t}</span>`).join('<b>I</b>')}</div>`);

define('video-mark', `
:host{position:absolute;left:64px;top:130px;display:flex;align-items:flex-end;gap:36px;color:rgba(255,255,255,.75);text-shadow:0 0 2px rgba(120,130,160,.25);white-space:nowrap;pointer-events:none;z-index:6}
.a{font:bold 47px/52px ${CJK}}.b{font:italic 900 70px/80px Lato,sans-serif;height:82px}`,
`<span class="a">立创EDA</span><span class="b">bilibili</span>`);

define('viewer-line', `:host{display:flex;align-items:center;gap:11px;height:80px;flex:none;background:#000;color:#6d6d6d;font-size:22px;padding:27px 0 0 82px}
eda-icon{width:27px;height:23px}`, `${ic('people')}<span>1人正在看</span>`);

define('eda-app', `
:host{display:flex;flex-direction:column;height:100vh;padding-top:80px;background:#000;position:relative}
main{flex:1;min-height:0;display:flex;background:#f0f0f0}`,
`<browser-tabs></browser-tabs><address-bar></address-bar><menu-bar></menu-bar><tool-bar></tool-bar>
<main><side-tabs side="left" tabs="所有工程,*工程设计,常用库,器件标准化"></side-tabs><project-panel></project-panel><split-bar dir="v"></split-bar>
<work-area></work-area><split-bar dir="v"></split-bar><property-panel></property-panel><side-tabs side="right" tabs="*属性,过滤"></side-tabs></main>
<split-bar dir="h"></split-bar><bottom-dock></bottom-dock><viewer-line></viewer-line><video-mark></video-mark>`);
</script>
</body>
</html>
